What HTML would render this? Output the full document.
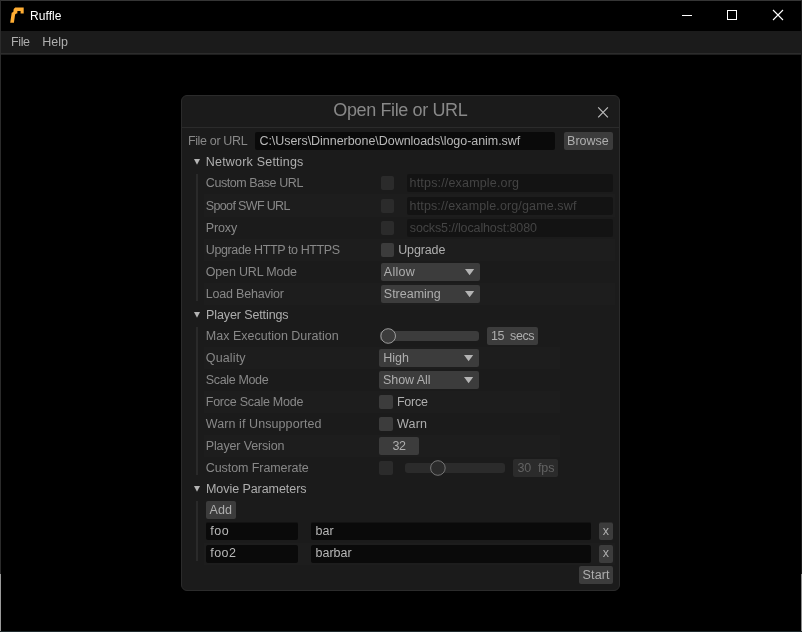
<!DOCTYPE html>
<html lang="en">
<head>
<meta charset="utf-8">
<title>Ruffle</title>
<style>
html,body{margin:0;padding:0;background:#000;}
body{width:802px;height:632px;overflow:hidden;position:relative;font-family:"Liberation Sans", sans-serif;font-size:12.5px;line-height:15px;}
#win{position:absolute;left:0;top:0;width:800px;height:630px;border:1px solid #2b2b2b;border-top-color:#353535;border-right-color:#1c1c1c;border-bottom-color:#1f2a2d;background:#000;}
#menubar{position:absolute;left:1px;top:31px;width:800px;height:22px;background:#1b1b1b;border-bottom:1px solid #2c2c2c;box-shadow:0 1px 0 #1e1e1e;}
#dlg{position:absolute;left:181px;top:95px;width:437px;height:494px;background:#1b1b1b;border:1px solid #2b2b2b;border-radius:6px;box-shadow:0 0 0 0 #000;}
#dlgsep{position:absolute;left:182px;top:127px;width:437px;height:1px;background:#2b2b2b;}
.b{position:absolute;}
#txt{position:absolute;left:0;top:0;width:802px;height:632px;will-change:transform;}
.t{position:absolute;white-space:pre;}
.ov{position:absolute;left:0;top:0;pointer-events:none;}
</style>
</head>
<body>
<div id="win"></div>
<div class="b" style="left:0;top:574px;width:1px;height:57px;background:#9a9a9a"></div>
<div class="b" style="left:801px;top:574px;width:1px;height:57px;background:#8c8c8c"></div>
<div id="menubar"></div>
<div id="dlg"></div>
<div id="dlgsep"></div>
<div class="b" style="left:204px;top:194px;width:411px;height:23px;background:#1d1d1d"></div>
<div class="b" style="left:204px;top:239px;width:411px;height:22px;background:#1d1d1d"></div>
<div class="b" style="left:204px;top:283px;width:411px;height:22px;background:#1d1d1d"></div>
<div class="b" style="left:204px;top:347px;width:356px;height:22px;background:#1d1d1d"></div>
<div class="b" style="left:204px;top:391px;width:356px;height:22px;background:#1d1d1d"></div>
<div class="b" style="left:204px;top:435px;width:356px;height:22px;background:#1d1d1d"></div>
<div class="b" style="left:204px;top:543px;width:411px;height:22px;background:#1d1d1d"></div>
<div class="b" style="left:196px;top:174px;width:2px;height:127px;background:#2a2a2a"></div>
<div class="b" style="left:196px;top:327px;width:2px;height:148px;background:#2a2a2a"></div>
<div class="b" style="left:196px;top:501px;width:2px;height:60px;background:#2a2a2a"></div>
<div class="b" style="left:255px;top:132px;width:300px;height:18px;background:#0a0a0a;border-radius:2px"></div>
<div class="b" style="left:564px;top:132px;width:49px;height:18px;background:#3c3c3c;border-radius:2px"></div>
<div class="b" style="left:407px;top:174px;width:206px;height:18px;background:#131313;border-radius:2px"></div>
<div class="b" style="left:407px;top:197px;width:206px;height:18px;background:#131313;border-radius:2px"></div>
<div class="b" style="left:407px;top:219px;width:206px;height:18px;background:#131313;border-radius:2px"></div>
<div class="b" style="left:381px;top:176px;width:13px;height:14px;background:#2b2b2b;border-radius:2px"></div>
<div class="b" style="left:381px;top:199px;width:13px;height:14px;background:#2b2b2b;border-radius:2px"></div>
<div class="b" style="left:381px;top:221px;width:13px;height:14px;background:#2b2b2b;border-radius:2px"></div>
<div class="b" style="left:381px;top:243px;width:13px;height:14px;background:#3c3c3c;border-radius:2px"></div>
<div class="b" style="left:381px;top:263px;width:99px;height:18px;background:#3c3c3c;border-radius:2px"></div>
<div class="b" style="left:381px;top:285px;width:99px;height:18px;background:#3c3c3c;border-radius:2px"></div>
<div class="b" style="left:380px;top:331px;width:99px;height:10px;background:#3c3c3c;border-radius:3px"></div>
<div class="b" style="left:487px;top:327px;width:51px;height:18px;background:#3c3c3c;border-radius:2px"></div>
<div class="b" style="left:379px;top:349px;width:100px;height:18px;background:#3c3c3c;border-radius:2px"></div>
<div class="b" style="left:379px;top:371px;width:100px;height:18px;background:#3c3c3c;border-radius:2px"></div>
<div class="b" style="left:379px;top:395px;width:14px;height:14px;background:#3c3c3c;border-radius:2px"></div>
<div class="b" style="left:379px;top:417px;width:14px;height:14px;background:#3c3c3c;border-radius:2px"></div>
<div class="b" style="left:379px;top:437px;width:40px;height:18px;background:#3c3c3c;border-radius:2px"></div>
<div class="b" style="left:379px;top:461px;width:14px;height:14px;background:#2b2b2b;border-radius:2px"></div>
<div class="b" style="left:405px;top:463px;width:100px;height:10px;background:#2b2b2b;border-radius:3px"></div>
<div class="b" style="left:513px;top:459px;width:45px;height:18px;background:#2b2b2b;border-radius:2px"></div>
<div class="b" style="left:206px;top:501px;width:30px;height:18px;background:#3c3c3c;border-radius:2px"></div>
<div class="b" style="left:206px;top:522px;width:92px;height:18px;background:#0a0a0a;border-radius:2px;border-top:1px solid #131313;box-sizing:border-box"></div>
<div class="b" style="left:311px;top:522px;width:280px;height:18px;background:#0a0a0a;border-radius:2px;border-top:1px solid #131313;box-sizing:border-box"></div>
<div class="b" style="left:599px;top:522px;width:14px;height:18px;background:#3c3c3c;border-radius:2px;border-top:1px solid #2b2b2b;box-sizing:border-box"></div>
<div class="b" style="left:206px;top:545px;width:92px;height:18px;background:#0a0a0a;border-radius:2px"></div>
<div class="b" style="left:311px;top:545px;width:280px;height:18px;background:#0a0a0a;border-radius:2px"></div>
<div class="b" style="left:599px;top:545px;width:14px;height:18px;background:#3c3c3c;border-radius:2px"></div>
<div class="b" style="left:579px;top:566px;width:34px;height:18px;background:#3c3c3c;border-radius:2px"></div>
<div id="txt">
<span class="t" style="left:30.00px;top:9px;color:#ffffff;letter-spacing:0.060px;font-size:12px;line-height:14px">Ruffle</span>
<span class="t" style="left:10.90px;top:35px;color:#aeaeae;letter-spacing:-0.339px">File</span>
<span class="t" style="left:42.20px;top:35px;color:#aeaeae;letter-spacing:0.043px">Help</span>
<span class="t" style="left:333.30px;top:99px;color:#888888;letter-spacing:-0.380px;font-size:18px;line-height:22px">Open File or URL</span>
<span class="t" style="left:187.90px;top:134px;color:#888888;letter-spacing:-0.347px">File or URL</span>
<span class="t" style="left:259.40px;top:134px;color:#b8b8b8;letter-spacing:-0.041px">C:\Users\Dinnerbone\Downloads\logo-anim.swf</span>
<span class="t" style="left:567.10px;top:134px;color:#aeaeae;letter-spacing:-0.016px">Browse</span>
<span class="t" style="left:205.80px;top:155px;color:#aeaeae;letter-spacing:0.203px">Network Settings</span>
<span class="t" style="left:206.00px;top:308px;color:#aeaeae;letter-spacing:-0.107px">Player Settings</span>
<span class="t" style="left:206.00px;top:482px;color:#aeaeae;letter-spacing:-0.063px">Movie Parameters</span>
<span class="t" style="left:205.80px;top:176px;color:#888888;letter-spacing:-0.426px">Custom Base URL</span>
<span class="t" style="left:205.80px;top:199px;color:#888888;letter-spacing:-0.646px">Spoof SWF URL</span>
<span class="t" style="left:205.80px;top:221px;color:#888888;letter-spacing:-0.138px">Proxy</span>
<span class="t" style="left:205.80px;top:243px;color:#888888;letter-spacing:-0.392px">Upgrade HTTP to HTTPS</span>
<span class="t" style="left:205.80px;top:265px;color:#888888;letter-spacing:-0.175px">Open URL Mode</span>
<span class="t" style="left:205.80px;top:287px;color:#888888;letter-spacing:-0.208px">Load Behavior</span>
<span class="t" style="left:205.80px;top:329px;color:#888888;letter-spacing:0.004px">Max Execution Duration</span>
<span class="t" style="left:205.80px;top:351px;color:#888888;letter-spacing:0.136px">Quality</span>
<span class="t" style="left:205.80px;top:373px;color:#888888;letter-spacing:-0.348px">Scale Mode</span>
<span class="t" style="left:205.80px;top:395px;color:#888888;letter-spacing:-0.259px">Force Scale Mode</span>
<span class="t" style="left:205.80px;top:417px;color:#888888;letter-spacing:0.083px">Warn if Unsupported</span>
<span class="t" style="left:205.80px;top:439px;color:#888888;letter-spacing:-0.146px">Player Version</span>
<span class="t" style="left:205.80px;top:461px;color:#888888;letter-spacing:-0.083px">Custom Framerate</span>
<span class="t" style="left:409.60px;top:176px;color:#444444;letter-spacing:0.171px">https://example.org</span>
<span class="t" style="left:409.60px;top:199px;color:#444444;letter-spacing:0.130px">https://example.org/game.swf</span>
<span class="t" style="left:409.80px;top:221px;color:#444444;letter-spacing:-0.128px">socks5://localhost:8080</span>
<span class="t" style="left:398.20px;top:243px;color:#aeaeae;letter-spacing:-0.122px">Upgrade</span>
<span class="t" style="left:383.80px;top:265px;color:#aeaeae;letter-spacing:0.269px">Allow</span>
<span class="t" style="left:383.80px;top:287px;color:#aeaeae;letter-spacing:-0.009px">Streaming</span>
<span class="t" style="left:491.00px;top:329px;color:#aeaeae;letter-spacing:-0.441px">15  secs</span>
<span class="t" style="left:383.20px;top:351px;color:#aeaeae;letter-spacing:0.012px">High</span>
<span class="t" style="left:383.00px;top:373px;color:#aeaeae;letter-spacing:-0.045px">Show All</span>
<span class="t" style="left:396.90px;top:395px;color:#aeaeae;letter-spacing:-0.206px">Force</span>
<span class="t" style="left:397.00px;top:417px;color:#aeaeae;letter-spacing:0.173px">Warn</span>
<span class="t" style="left:392.40px;top:439px;color:#aeaeae;letter-spacing:-0.353px">32</span>
<span class="t" style="left:517.40px;top:461px;color:#626262;letter-spacing:-0.074px">30  fps</span>
<span class="t" style="left:209.60px;top:503px;color:#aeaeae;letter-spacing:0.073px">Add</span>
<span class="t" style="left:210.20px;top:524px;color:#b8b8b8;letter-spacing:0.599px">foo</span>
<span class="t" style="left:210.20px;top:546px;color:#b8b8b8;letter-spacing:0.473px">foo2</span>
<span class="t" style="left:315.40px;top:524px;color:#b8b8b8;letter-spacing:0.052px">bar</span>
<span class="t" style="left:315.40px;top:546px;color:#b8b8b8;letter-spacing:0.052px">barbar</span>
<span class="t" style="left:602.80px;top:524px;color:#aeaeae;letter-spacing:-0.047px">x</span>
<span class="t" style="left:602.80px;top:546px;color:#aeaeae;letter-spacing:-0.047px">x</span>
<span class="t" style="left:582.60px;top:568px;color:#aeaeae;letter-spacing:0.128px">Start</span>
</div>
<svg class="ov" width="802" height="632" viewBox="0 0 802 632">
<!-- app icon -->
<path d="M10.2 22.7 L13.9 22.7 L15.1 14.6 L16.2 13.5 L17.3 13.5 L17.4 10.9 L20.6 10.9 L20.6 13.5 L23.7 13.5 L23.7 7.5 L15.2 7.5 L13.7 9 L13.3 12 L11.7 12.8 Z" fill="#ffad33"/>
<!-- window controls -->
<rect x="682" y="15" width="10" height="1" fill="#fff"/>
<rect x="727.5" y="10.5" width="9" height="9" fill="none" stroke="#fff" stroke-width="1"/>
<path d="M773 10 L783 20 M783 10 L773 20" stroke="#fff" stroke-width="1.1" fill="none"/>
<!-- dialog close -->
<path d="M598.2 107.3 L607.9 117.3 M607.9 107.3 L598.2 117.3" stroke="#bcbcbc" stroke-width="1.2" fill="none"/>
<!-- collapsing arrows -->
<path d="M194 159 L200 159 L197 164.8 Z" fill="#b4b4b4"/>
<path d="M194 312 L200 312 L197 317.8 Z" fill="#b4b4b4"/>
<path d="M194 485.9 L200 485.9 L197 491.7 Z" fill="#b4b4b4"/>
<!-- combo arrows -->
<path d="M465 269 L474.2 269 L469.6 275.2 Z" fill="#b4b4b4"/>
<path d="M465 291 L474.2 291 L469.6 297.2 Z" fill="#b4b4b4"/>
<path d="M464 355 L473.2 355 L468.6 361.2 Z" fill="#b4b4b4"/>
<path d="M464 377 L473.2 377 L468.6 383.2 Z" fill="#b4b4b4"/>
<!-- slider knobs -->
<circle cx="388.2" cy="336" r="7.3" fill="#3c3c3c" stroke="#a8a8a8" stroke-width="0.9"/>
<circle cx="437.9" cy="468" r="7.3" fill="#2b2b2b" stroke="#767676" stroke-width="1"/>
</svg>
</body>
</html>
